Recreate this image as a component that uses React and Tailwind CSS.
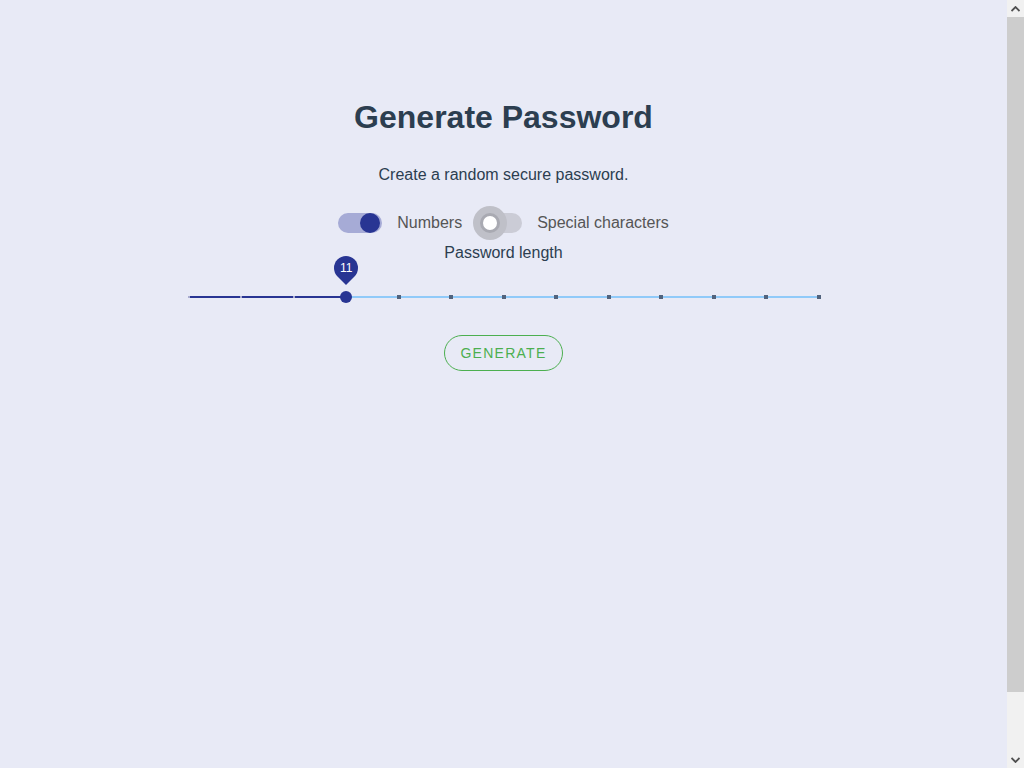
import React, { useState } from 'react'

const MIN = 8
const MAX = 20

const Toggle = ({ checked, onChange, label, focused }) => (
    <label className="flex items-center cursor-pointer select-none">
        <span className="relative w-[44px] h-[38px] flex items-center">
            <span
                className={`w-[44px] h-[20px] rounded-full ${checked ? 'bg-[#a6abd6]' : 'bg-[#cbccd6]'}`}
            />
            {focused && !checked && (
                <span className="absolute left-[-5px] top-[2px] w-[34px] h-[34px] rounded-full bg-[#bfc0c8]" />
            )}
            <span
                className={`absolute top-[9px] w-[20px] h-[20px] rounded-full ${checked
                    ? 'left-[22px] bg-[#283593]'
                    : 'left-[2px] bg-white border-[3px] border-[#a9aab2]'
                    }`}
            />
            <input type="checkbox" className="hidden" checked={checked} onChange={onChange} />
        </span>
        <span className="ml-[15px] text-[16px] text-[#555]">{label}</span>
    </label>
)

const Chevron = ({ up }) => (
    <svg width="9" height="6" viewBox="0 0 9 6" className={up ? '' : 'rotate-180'}>
        <path d="M0.5 5 L4.5 1 L8.5 5" fill="none" stroke="#505050" strokeWidth="1.8" />
    </svg>
)

const App = () => {
    const [numbers, setNumbers] = useState(true)
    const [special, setSpecial] = useState(false)
    const [length, setLength] = useState(11)

    const steps = MAX - MIN
    const pct = ((length - MIN) / steps) * 100
    const marks = Array.from({ length: steps + 1 }, (_, i) => i)

    return (
        <div className="h-[768px] flex bg-[#e8eaf6] font-['Liberation_Sans',Arial,sans-serif] overflow-hidden">
            <main className="flex-1 flex flex-col items-center">
                <h1 className="mt-[99px] text-[32px] leading-[37px] font-bold text-[#2c3e50]">Generate Password</h1>
                <p className="mt-[30px] text-[16px] leading-[18px] text-[#2c3e50]">Create a random secure password.</p>

                <div className="mt-[20px] flex items-center h-[38px] gap-[16px]">
                    <Toggle checked={numbers} onChange={() => setNumbers(!numbers)} label="Numbers" />
                    <Toggle checked={special} onChange={() => setSpecial(!special)} label="Special characters" focused />
                </div>

                <p className="mt-[2px] text-[16px] leading-[18px] text-[#2c3e50]">Password length</p>

                <div className="mt-[23px] w-[630px] h-[24px] relative">
                    <div className="absolute left-0 right-0 top-[11px] h-[2px] bg-[#90caf9]" />
                    <div className="absolute left-0 top-[11px] h-[2px] bg-[#283593]" style={{ width: `${pct}%` }} />
                    {marks.map((i) => {
                        const active = i + MIN <= length
                        return (
                            <span
                                key={i}
                                className={`absolute -translate-x-1/2 ${active ? 'w-[2px] h-[2px] top-[11px] bg-[#a9acd0]' : 'w-[4px] h-[4px] top-[10px] bg-[#52637d]'}`}
                                style={{ left: `${(i / steps) * 100}%` }}
                            />
                        )
                    })}
                    <div
                        className="absolute top-[6px] w-[12px] h-[12px] -ml-[6px] rounded-full bg-[#283593]"
                        style={{ left: `${pct}%` }}
                    />
                    <div
                        className="absolute top-[-29px] -ml-[12px] w-[24px] h-[24px] rotate-45 rounded-tl-full rounded-tr-full rounded-bl-full bg-[#283593] flex items-center justify-center"
                        style={{ left: `${pct}%` }}
                    >
                        <span className="-rotate-45 text-[12px] text-white leading-none">{length}</span>
                    </div>
                    <input
                        type="range"
                        min={MIN}
                        max={MAX}
                        value={length}
                        onChange={(e) => setLength(Number(e.target.value))}
                        className="absolute inset-0 w-full opacity-0 cursor-pointer"
                    />
                </div>

                <button className="mt-[26px] h-[36px] px-[15px] rounded-full border border-[#4caf50] text-[#4caf50] text-[14px] tracking-[0.09em] uppercase">
                    Generate
                </button>
            </main>

            {/* fake classic scrollbar */}
            <aside className="w-[17px] bg-[#f1f1f1] flex flex-col">
                <div className="h-[17px] flex items-center justify-center"><Chevron up /></div>
                <div className="h-[675px] bg-[#cdcdcd]" />
                <div className="flex-1" />
                <div className="h-[17px] flex items-center justify-center"><Chevron /></div>
            </aside>
        </div>
    )
}

export default App
